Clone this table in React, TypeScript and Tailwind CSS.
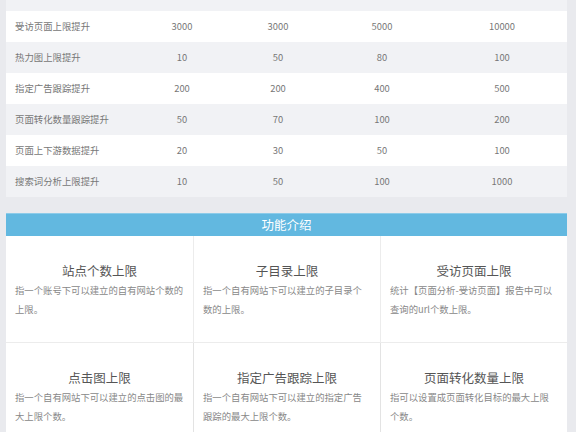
const font = { fontFamily: '"Noto Sans CJK SC", "Noto Sans", sans-serif' };

type Row = { label: string; values: string[] };

const rows: Row[] = [
  { label: "受访页面上限提升", values: ["3000", "3000", "5000", "10000"] },
  { label: "热力图上限提升", values: ["10", "50", "80", "100"] },
  { label: "指定广告跟踪提升", values: ["200", "200", "400", "500"] },
  { label: "页面转化数量跟踪提升", values: ["50", "70", "100", "200"] },
  { label: "页面上下游数据提升", values: ["20", "30", "50", "100"] },
  { label: "搜索词分析上限提升", values: ["10", "50", "100", "1000"] },
];

// lines split as in the design
const features = [
  { title: "站点个数上限", lines: ["指一个账号下可以建立的自有网站个数的", "上限。"] },
  { title: "子目录上限", lines: ["指一个自有网站下可以建立的子目录个", "数的上限。"] },
  { title: "受访页面上限", lines: ["统计【页面分析-受访页面】报告中可以", "查询的url个数上限。"] },
  { title: "点击图上限", lines: ["指一个自有网站下可以建立的点击图的最", "大上限个数。"] },
  { title: "指定广告跟踪上限", lines: ["指一个自有网站下可以建立的指定广告", "跟踪的最大上限个数。"] },
  { title: "页面转化数量上限", lines: ["指可以设置成页面转化目标的最大上限", "个数。"] },
];

const colWidths = ["w-[129px]", "w-[94px]", "w-[98px]", "w-[110px]", "w-[130px]"];

export default function App() {
  return (
    <div className="min-h-[432px] w-[576px] overflow-hidden bg-[#e9eaee] px-[6px] text-[#777]" style={font}>
      <div className="w-[561px]">
        <div className="h-[11px] bg-[#f1f2f5]" />
        {rows.map((r, i) => (
          <div
            key={r.label}
            className={`flex h-[31px] items-center text-[9.4px] ${i % 2 === 0 ? "bg-white" : "bg-[#f1f2f5]"}`}
          >
            <div className={`${colWidths[0]} pl-[9px]`}>{r.label}</div>
            {r.values.map((v, j) => (
              <div key={j} className={`${colWidths[j + 1]} text-center`}>
                {v}
              </div>
            ))}
          </div>
        ))}
      </div>

      <div className="mt-[16px] w-[561px]">
        <div className="flex h-[23px] items-center justify-center border-t border-[#8ccbe9] bg-[#62b8e0] text-[12.5px] text-white">
          功能介绍
        </div>
        <div className="grid grid-cols-3 bg-white">
          {features.map((f, i) => (
            <div
              key={f.title}
              className={`h-[107px] px-[9px] pt-[26px] ${i % 3 !== 0 ? "border-l border-[#e3e3e3]" : ""} ${
                i < 3 ? "border-b border-[#ececec]" : ""
              }`}
            >
              <div className="text-center text-[12.5px] leading-[18px] text-[#555]">{f.title}</div>
              <div className="mt-[1px] text-[9.36px] leading-[19px] text-[#888]">
                {f.lines.map((l) => (
                  <div key={l} className="whitespace-nowrap">
                    {l}
                  </div>
                ))}
              </div>
            </div>
          ))}
        </div>
      </div>
    </div>
  );
}
